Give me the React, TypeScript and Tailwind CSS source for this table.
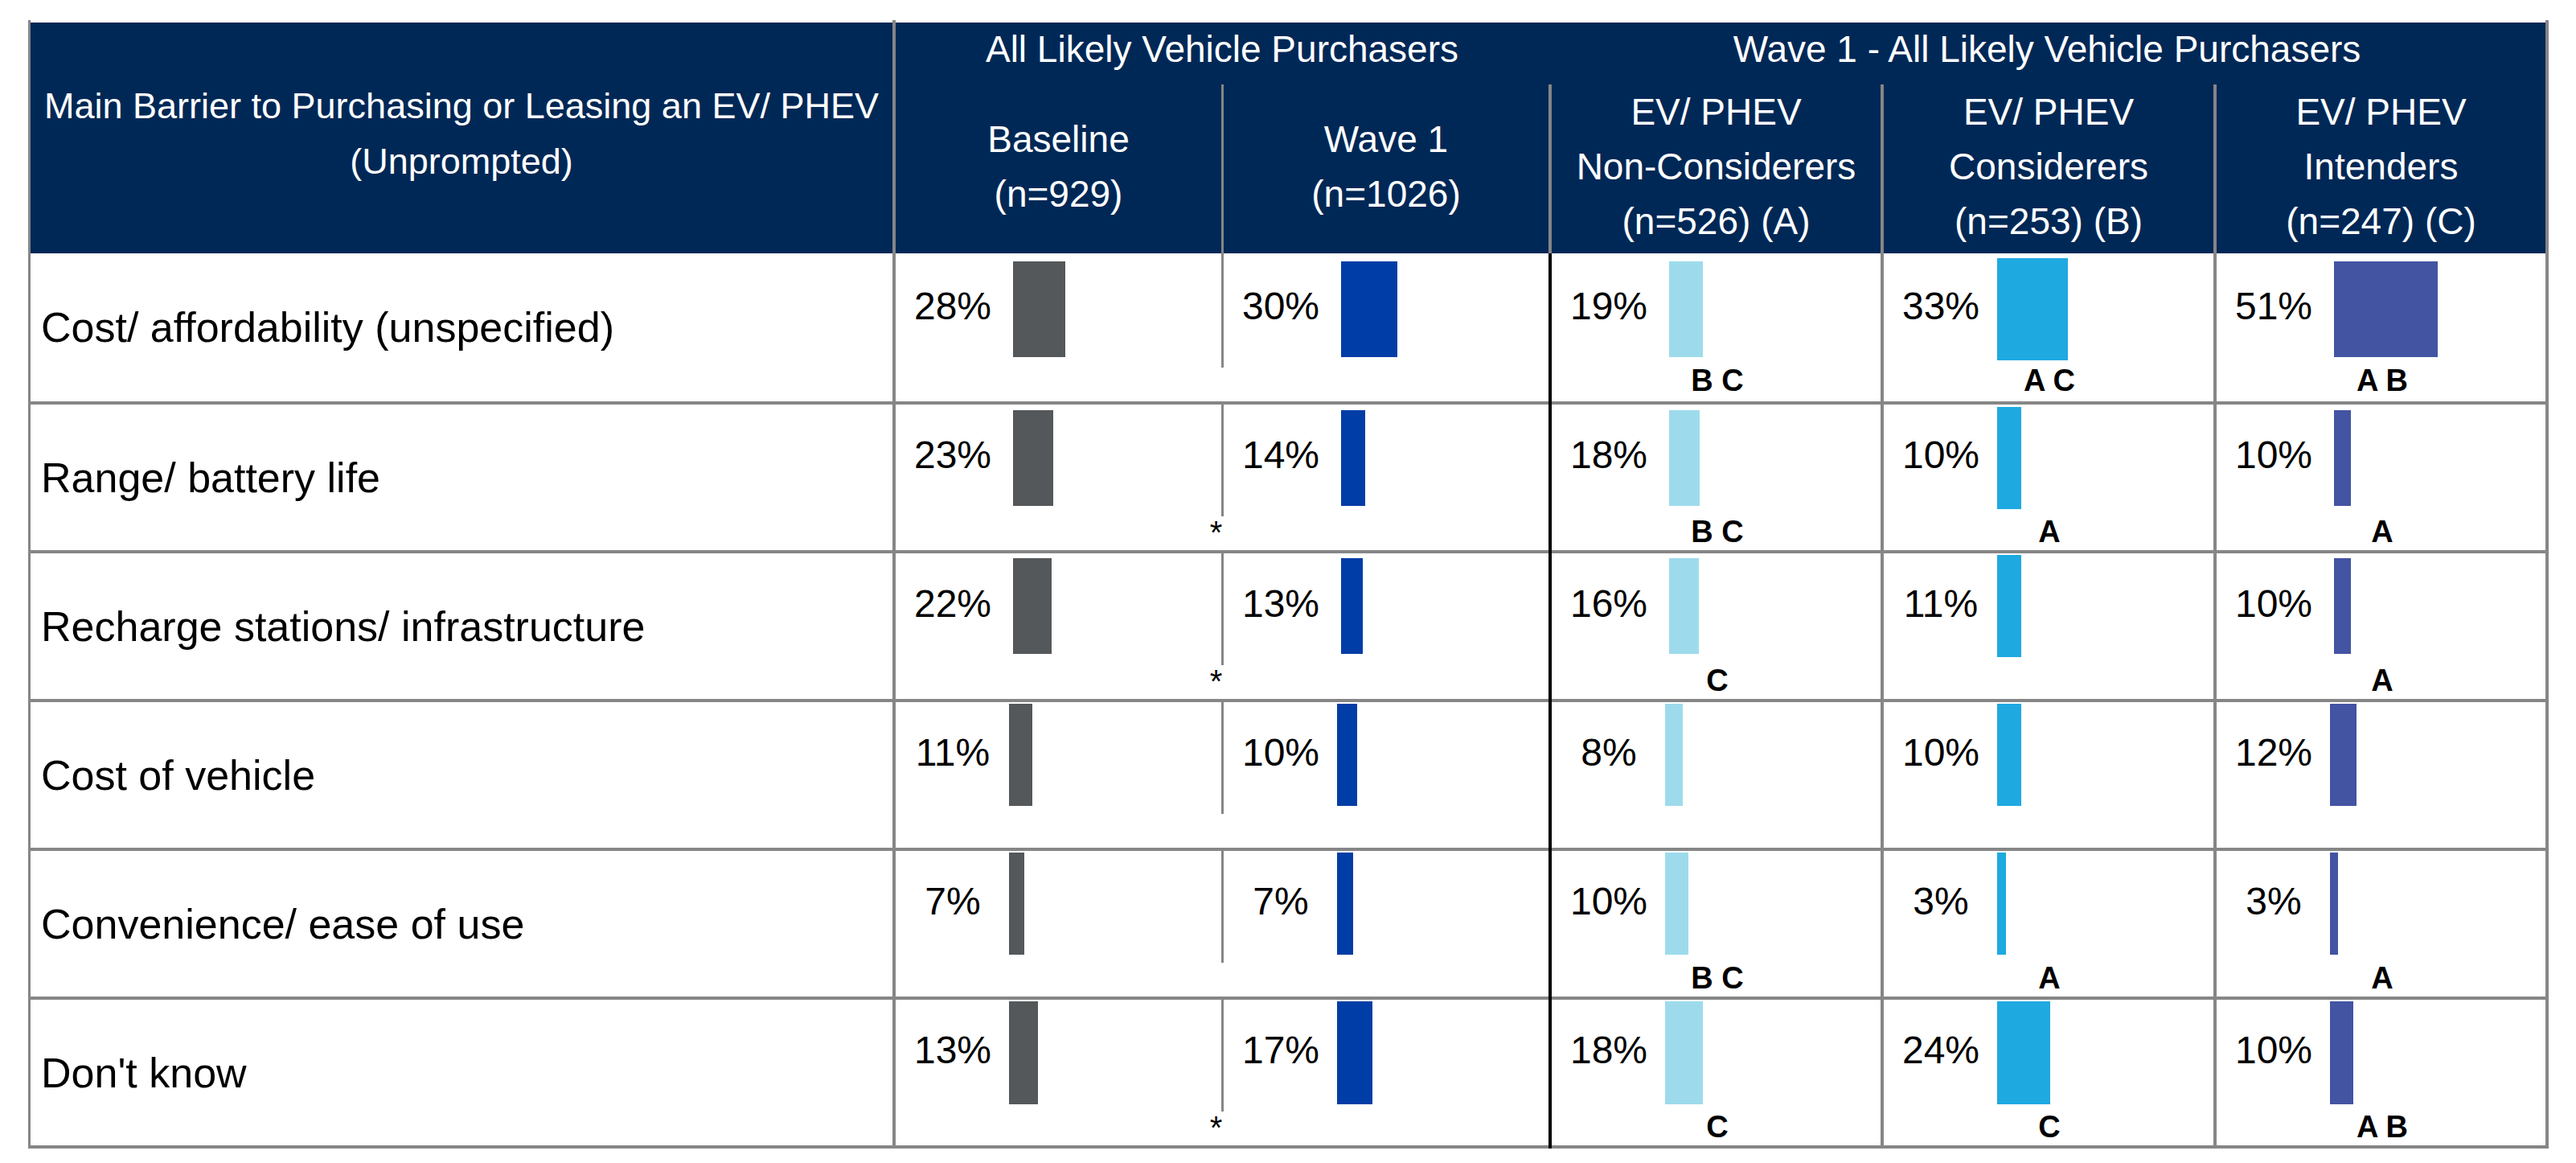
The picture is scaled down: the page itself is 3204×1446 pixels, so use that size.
import React from 'react';

type Row = {
  label: string;
  vals: number[];
  widths: number[];
  sig: string[];
  star: boolean;
};

const rows: Row[] = [
  { label: 'Cost/ affordability (unspecified)', vals: [28, 30, 19, 33, 51], widths: [65, 70, 42, 88, 129], sig: ['', '', 'B C', 'A C', 'A B'], star: false },
  { label: 'Range/ battery life', vals: [23, 14, 18, 10, 10], widths: [50, 30, 38, 30, 21], sig: ['', '', 'B C', 'A', 'A'], star: true },
  { label: 'Recharge stations/ infrastructure', vals: [22, 13, 16, 11, 10], widths: [48, 27, 37, 30, 21], sig: ['', '', 'C', '', 'A'], star: true },
  { label: 'Cost of vehicle', vals: [11, 10, 8, 10, 12], widths: [29, 25, 22, 30, 33], sig: ['', '', '', '', ''], star: false },
  { label: 'Convenience/ ease of use', vals: [7, 7, 10, 3, 3], widths: [19, 20, 29, 11, 10], sig: ['', '', 'B C', 'A', 'A'], star: false },
  { label: "Don't know", vals: [13, 17, 18, 24, 10], widths: [36, 44, 47, 66, 29], sig: ['', '', 'C', 'C', 'A B'], star: true },
];

const barColors = ['bg-[#54585b]', 'bg-[#003da6]', 'bg-[#9ddbec]', 'bg-[#1fa9e1]', 'bg-[#4354a3]'];
const cellWidths = ['w-[405px]', 'w-[404px]', 'w-[409px]', 'w-[410px]', 'w-[409px]'];

function ChartCell({ row, col, value, width, sig }: { row: number; col: number; value: number; width: number; sig: string }) {
  const considerers = col === 3;
  // bars in the top three rows sit a little lower, except the Considerers column
  const top = row < 3 ? (considerers ? [6, 3, 2][row] : [10, 7, 6][row]) : 2;
  const height = row < 3 ? (considerers ? 127 : 119) : row === 5 ? 128 : 127;
  const left = row < 3 && !considerers ? 20 : 15;

  return (
    <div className={`${cellWidths[col]} shrink-0 border-b-4 border-[#868686] flex flex-col`}>
      <div className="flex items-start h-[130px] shrink-0">
        <div className={`w-[110px] ml-[16px] shrink-0 text-center text-[48px] leading-[48px] text-black ${row === 0 ? 'mt-[42px]' : 'mt-[39px]'}`}>
          {value}%
        </div>
        <div className={`${barColors[col]} shrink-0`} style={{ width, height, marginTop: top, marginLeft: left }} />
      </div>
      {sig && (
        <div className="ml-[146px] w-[120px] mt-[9px] text-center text-[38px] leading-[38px] font-bold text-black whitespace-nowrap">
          {sig}
        </div>
      )}
    </div>
  );
}

function SubHeader({ lines, w }: { lines: string[]; w: string }) {
  return (
    <div className={`${w} shrink-0 flex items-center justify-center text-center pb-[9px]`}>
      <div className="text-[46px] leading-[68px] whitespace-nowrap">
        {lines.map((l) => (
          <div key={l}>{l}</div>
        ))}
      </div>
    </div>
  );
}

export default function App() {
  return (
    <div className="w-[3204px] h-[1446px] bg-white overflow-hidden font-['Liberation_Sans',Arial,sans-serif] text-black">
      <div className="ml-[35px] mt-[25px] w-[3135px] border-l-[3px] border-r-[4px] border-[#868686] flex flex-col">
        {/* Header */}
        <div className="flex items-end h-[290px] text-white">
          <div className="w-[1072px] h-[287px] shrink-0 bg-[#002856] flex items-center justify-center text-center pb-[12px]">
            <div className="text-[45px] leading-[69px] whitespace-nowrap">
              <div>Main Barrier to Purchasing or Leasing an EV/ PHEV</div>
              <div>(Unprompted)</div>
            </div>
          </div>
          <div className="w-[4px] h-[290px] shrink-0 bg-[#868686]" />
          <div className="flex-1 h-[287px] bg-[#002856] flex flex-col">
            <div className="flex h-[77px] shrink-0 text-[46px] leading-[46px] whitespace-nowrap">
              <div className="w-[812px] shrink-0 text-center pt-[10px]">All Likely Vehicle Purchasers</div>
              <div className="flex-1 text-center pt-[10px]">Wave 1 - All Likely Vehicle Purchasers</div>
            </div>
            <div className="flex flex-1">
              <SubHeader w="w-[405px]" lines={['Baseline', '(n=929)']} />
              <div className="w-[3px] shrink-0 bg-[#868686]" />
              <SubHeader w="w-[404px]" lines={['Wave 1', '(n=1026)']} />
              <div className="w-[4px] shrink-0 bg-[#868686]" />
              <SubHeader w="w-[409px]" lines={['EV/ PHEV', 'Non-Considerers', '(n=526) (A)']} />
              <div className="w-[4px] shrink-0 bg-[#868686]" />
              <SubHeader w="w-[410px]" lines={['EV/ PHEV', 'Considerers', '(n=253) (B)']} />
              <div className="w-[4px] shrink-0 bg-[#868686]" />
              <SubHeader w="w-[409px]" lines={['EV/ PHEV', 'Intenders', '(n=247) (C)']} />
            </div>
          </div>
        </div>

        {/* Body rows */}
        {rows.map((r, i) => (
          <div key={r.label} className={`flex ${i === 0 ? 'h-[188px]' : 'h-[185px]'}`}>
            <div className="w-[1072px] shrink-0 border-b-4 border-[#868686] flex items-center pl-[13px]">
              <span className="text-[52px] leading-[52px] whitespace-nowrap">{r.label}</span>
            </div>
            <div className="w-[4px] shrink-0 bg-[#868686]" />
            <ChartCell row={i} col={0} value={r.vals[0]} width={r.widths[0]} sig={r.sig[0]} />
            <div className="w-[3px] shrink-0 border-b-4 border-[#868686] flex flex-col items-center">
              <div className={`w-[3px] shrink-0 bg-[#868686] ${i === 0 ? 'h-[142px]' : 'h-[139px]'}`} />
              {r.star && <div className="text-[40px] leading-[40px] -translate-x-[8px]">*</div>}
            </div>
            <ChartCell row={i} col={1} value={r.vals[1]} width={r.widths[1]} sig={r.sig[1]} />
            <div className="w-[4px] shrink-0 bg-black" />
            <ChartCell row={i} col={2} value={r.vals[2]} width={r.widths[2]} sig={r.sig[2]} />
            <div className="w-[4px] shrink-0 bg-[#868686]" />
            <ChartCell row={i} col={3} value={r.vals[3]} width={r.widths[3]} sig={r.sig[3]} />
            <div className="w-[4px] shrink-0 bg-[#868686]" />
            <ChartCell row={i} col={4} value={r.vals[4]} width={r.widths[4]} sig={r.sig[4]} />
          </div>
        ))}
      </div>
    </div>
  );
}
